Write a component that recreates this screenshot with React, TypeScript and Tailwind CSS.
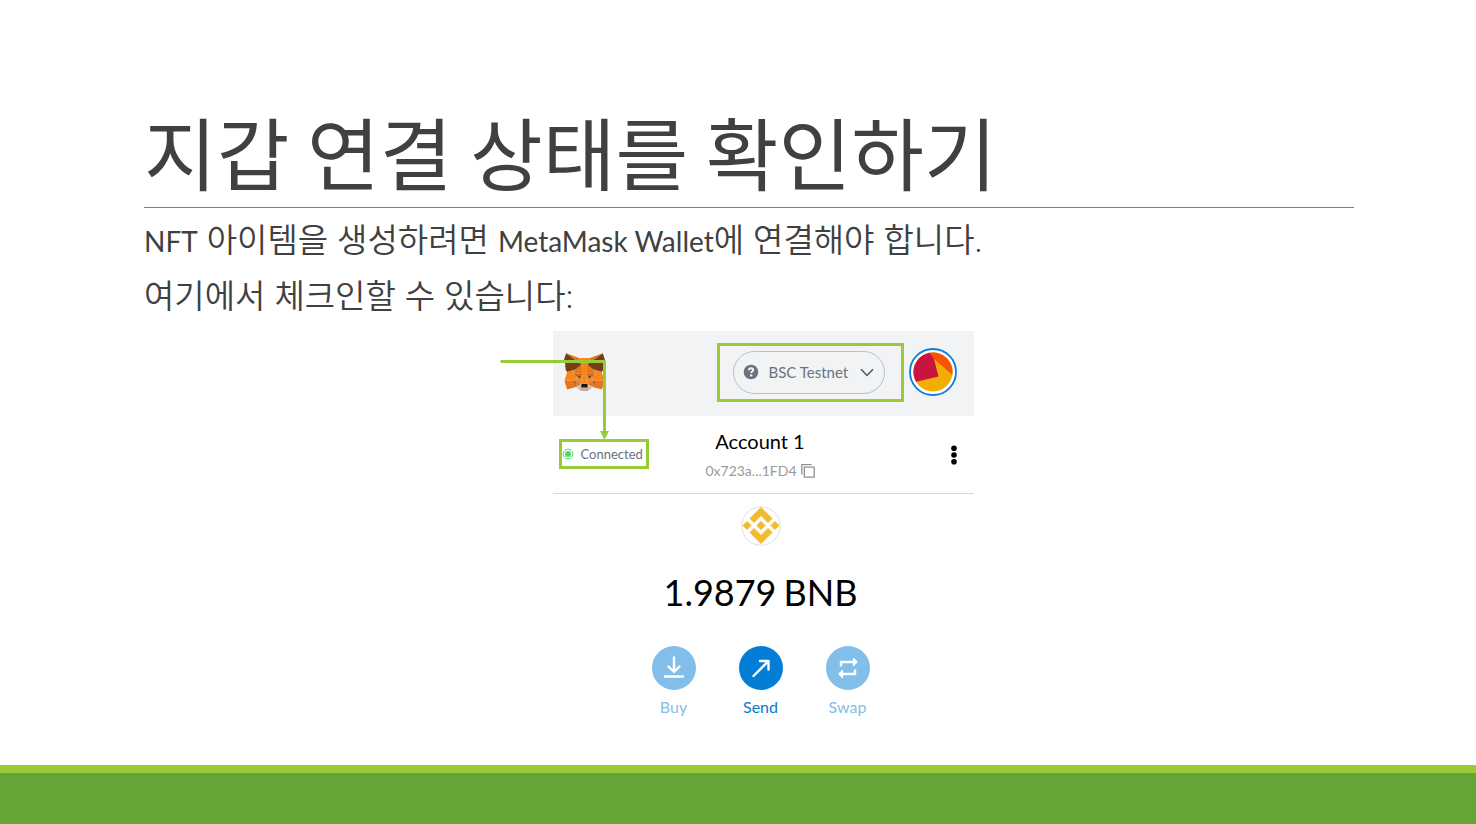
import type { ReactNode } from "react";

const foxFacets: [string, string][] = [
  ["#E2761B", "274.1,35.5 174.6,109.4 193,65.8"],
  ["#E4761B", "44.4,35.5 143.1,110.1 125.6,65.8"],
  ["#E4761B", "238.3,206.8 211.8,247.4 268.5,263 284.8,207.7"],
  ["#E4761B", "33.9,207.7 50.1,263 106.8,247.4 80.3,206.8"],
  ["#E4761B", "103.6,138.2 87.8,162.1 144.1,164.6 142.1,104.1"],
  ["#E4761B", "214.9,138.2 175.9,103.4 174.6,164.6 230.8,162.1"],
  ["#E4761B", "106.8,247.4 140.6,230.9 111.4,208.1"],
  ["#E4761B", "177.9,230.9 211.8,247.4 207.1,208.1"],
  ["#D7C1B3", "211.8,247.4 177.9,230.9 180.6,253 180.3,262.3"],
  ["#D7C1B3", "106.8,247.4 138.3,262.3 138.1,253 140.6,230.9"],
  ["#233447", "138.8,193.5 110.6,185.2 130.5,176.1"],
  ["#233447", "179.7,193.5 188,176.1 208,185.2"],
  ["#CD6116", "106.8,247.4 111.6,206.8 80.3,207.7"],
  ["#CD6116", "207,206.8 211.8,247.4 238.3,207.7"],
  ["#CD6116", "230.8,162.1 174.6,164.6 179.8,193.5 188.1,176.1 208.1,185.2"],
  ["#CD6116", "110.6,185.2 130.6,176.1 138.8,193.5 144.1,164.6 87.8,162.1"],
  ["#E4751F", "87.8,162.1 111.4,208.1 110.6,185.2"],
  ["#E4751F", "208.1,185.2 207.1,208.1 230.8,162.1"],
  ["#E4751F", "144.1,164.6 138.8,193.5 145.4,227.6 146.9,182.7"],
  ["#E4751F", "174.6,164.6 171.9,182.6 173.1,227.6 179.8,193.5"],
  ["#F6851B", "179.8,193.5 173.1,227.6 177.9,230.9 207.1,208.1 208.1,185.2"],
  ["#F6851B", "110.6,185.2 111.4,208.1 140.6,230.9 145.4,227.6 138.8,193.5"],
  ["#C0AD9E", "180.3,262.3 180.6,253 178.1,250.8 140.4,250.8 138.1,253 138.3,262.3 106.8,247.4 117.8,256.4 140.1,271.9 178.4,271.9 200.8,256.4 211.8,247.4"],
  ["#161616", "177.9,230.9 173.1,227.6 145.4,227.6 140.6,230.9 138.1,253 140.4,250.8 178.1,250.8 180.6,253"],
  ["#763D16", "278.3,114.2 286.8,73.4 274.1,35.5 177.9,106.9 214.9,138.2 267.2,153.5 278.8,140 273.8,136.4 281.8,129.1 275.6,124.3 283.6,118.2"],
  ["#763D16", "31.8,73.4 40.3,114.2 34.9,118.2 42.9,124.3 36.8,129.1 44.8,136.4 39.8,140 51.3,153.5 103.6,138.2 140.6,106.9 44.4,35.5"],
  ["#F6851B", "267.2,153.5 214.9,138.2 230.8,162.1 207.1,208.1 238.3,207.7 284.8,207.7"],
  ["#F6851B", "103.6,138.2 51.3,153.5 33.9,207.7 80.3,207.7 111.4,208.1 87.8,162.1"],
  ["#F6851B", "174.6,164.6 177.9,106.9 193.1,65.8 125.6,65.8 140.6,106.9 144.1,164.6 145.3,182.8 145.4,227.6 173.1,227.6 173.3,182.8"],
];

function FoxLogo() {
  return (
    <svg viewBox="31 35 257 237" className="h-[38px] w-[41px]" aria-hidden="true">
      {foxFacets.map(([fill, points]) => (
        <polygon key={points} fill={fill} points={points} />
      ))}
    </svg>
  );
}

function Avatar() {
  return (
    <svg viewBox="0 0 48 48" className="size-12" aria-hidden="true">
      <defs>
        <clipPath id="avatar-disc">
          <circle cx="24" cy="24" r="19.6" />
        </clipPath>
      </defs>
      <circle cx="24" cy="24" r="23" fill="#fff" stroke="#0a7fd9" strokeWidth="1.8" />
      <g clipPath="url(#avatar-disc)">
        <rect width="48" height="48" fill="#f3ae04" />
        <path d="M17 0H48V31L25 11L19 5Z" fill="#fa5400" />
        <path d="M0 0H17L25 11L29.5 28.5L0 35.5Z" fill="#c8143f" />
      </g>
    </svg>
  );
}

function BnbLogo() {
  return (
    <svg viewBox="0 0 40 40" className="size-10" aria-hidden="true">
      <circle cx="20" cy="20" r="19.2" fill="#fff" stroke="#dcdee1" strokeWidth="1" />
      <svg x="1.5" y="1" width="37" height="37" viewBox="-1.5 -1.5 129.61 129.61" fill="#f3ba2f" stroke="#f3ba2f" strokeWidth="3">
        <path d="M38.73 53.2l24.59-24.58 24.6 24.6 14.3-14.31L63.32 0l-38.9 38.9zM0 63.31L14.3 49l14.31 14.31-14.31 14.3zM38.73 73.41L63.32 98l24.6-24.6 14.31 14.29-38.91 38.92-38.91-38.89zM98 63.31L112.3 49l14.31 14.3-14.31 14.32zM77.83 63.3L63.32 48.78 48.78 63.3l14.54 14.52z" />
      </svg>
    </svg>
  );
}

function Action({ label, active, children }: { label: string; active?: boolean; children: ReactNode }) {
  return (
    <button
      type="button"
      className={
        active
          ? "flex w-11 flex-col items-center gap-[7px] text-[#037dd6]"
          : "flex w-11 flex-col items-center gap-[7px] text-[#81beea]"
      }
    >
      <span
        className={
          active
            ? "flex size-11 items-center justify-center rounded-full bg-[#037dd6]"
            : "flex size-11 items-center justify-center rounded-full bg-[#81beea]"
        }
      >
        <svg viewBox="0 0 24 24" className="size-6" fill="none" stroke="#fff" strokeWidth="2.4" strokeLinecap="round" strokeLinejoin="round" aria-hidden="true">
          {children}
        </svg>
      </span>
      <span className="text-base leading-5">{label}</span>
    </button>
  );
}

function Wallet() {
  return (
    <section aria-label="MetaMask" className="relative w-[421px] font-['Lato',sans-serif]">
      <header className="flex h-[85px] items-center bg-[#f2f3f5] pr-[17px] pb-[3px] pl-[11px]">
        <FoxLogo />
        <div className="ml-auto border-3 border-[#99cb38] py-[5px] pr-4 pl-[13px]">
          <div className="relative flex h-[43px] w-[152px] items-center rounded-full border border-[#bbc0c5]">
            <svg viewBox="0 0 16 16" className="pointer-events-none absolute left-[9px] size-4" aria-hidden="true">
              <circle cx="8" cy="8" r="7.3" fill="#6a737d" />
              <path d="M5.9 6.3C6 4.9 6.9 4.3 8.1 4.3c1.2 0 2.1.7 2.1 1.8 0 1.5-1.9 1.5-1.9 2.9" fill="none" stroke="#f2f3f5" strokeWidth="1.9" />
              <circle cx="8.2" cy="11.4" r="1.2" fill="#f2f3f5" />
            </svg>
            <select aria-label="Network" className="h-full w-full appearance-none rounded-full bg-transparent pl-[35px] text-[15px] text-[#6a737d]">
              <option>BSC Testnet</option>
            </select>
            <svg viewBox="0 0 14 9" className="pointer-events-none absolute right-[10px] h-[9px] w-[14px]" fill="none" stroke="#4d545b" strokeWidth="1.5" aria-hidden="true">
              <path d="M1 1.2L7 7.5L13 1.2" />
            </svg>
          </div>
        </div>
        <button type="button" aria-label="Account menu" className="ml-[5px]">
          <Avatar />
        </button>
      </header>

      <div className="grid h-[78px] grid-cols-[1fr_auto_1fr] items-center border-b border-[#d6d9dc] pr-3 pl-[6px]">
        <div className="mb-0.5 flex h-[30px] w-[90px] items-center gap-[7px] border-3 border-[#99cb38]">
          <svg viewBox="0 0 12 12" className="size-3 shrink-0" aria-hidden="true">
            <circle cx="6" cy="6" r="4.8" fill="none" stroke="#4cd964" strokeWidth="1" />
            <circle cx="6" cy="6" r="3" fill="#4cd964" />
          </svg>
          <span className="text-[13px] leading-4 text-[#6a737d]">Connected</span>
        </div>
        <div className="flex flex-col items-center gap-2">
          <h2 className="text-xl leading-6 text-black">Account 1</h2>
          <button type="button" className="flex items-center gap-1 text-sm leading-5 text-[#989a9b]">
            0x723a...1FD4
            <svg viewBox="0 0 14 14" className="size-[14px]" fill="none" stroke="#8f9295" strokeWidth="1.3" aria-hidden="true">
              <path d="M10.5 .7H.8V10.5" />
              <path d="M3.3 3.2H13.2V13.2H3.3Z" />
            </svg>
          </button>
        </div>
        <button type="button" aria-label="Account options" className="justify-self-end">
          <svg viewBox="0 0 16 20" className="h-5 w-4" fill="#000" aria-hidden="true">
            <circle cx="8" cy="3.2" r="2.8" />
            <circle cx="8" cy="10" r="2.8" />
            <circle cx="8" cy="16.8" r="2.8" />
          </svg>
        </button>
      </div>

      <div className="flex flex-col items-center pt-3 pr-[5px]">
        <BnbLogo />
        <p className="mt-5 flex gap-[7px] text-4xl leading-[52px] text-black">
          <span>1.9879</span>
          <span>BNB</span>
        </p>
        <div className="mt-7 flex gap-[43px]">
          <Action label="Buy">
            <path d="M12 1.5V15.5M6.5 10.5L12 16L17.5 10.5M3 20.5H21" />
          </Action>
          <Action label="Send" active>
            <path d="M4.5 20L19.5 5M11 5H19.5V13.5" />
          </Action>
          <Action label="Swap">
            <path d="M5 10.5V6H18M19 13.5V18H6" strokeLinecap="butt" strokeLinejoin="miter" />
            <path d="M17.5 2.5L21 6L17.5 9.5ZM6.5 14.5L3 18L6.5 21.5Z" fill="#fff" strokeWidth="1.2" />
          </Action>
        </div>
      </div>

      <svg viewBox="0 0 110 82" className="pointer-events-none absolute top-[27px] -left-[53px] h-[82px] w-[110px]" aria-hidden="true">
        <path d="M0.5 3.5H104.500V76" fill="none" stroke="#99cb38" strokeWidth="3" strokeLinejoin="round" />
        <path d="M100 73H109L104.5 82Z" fill="#99cb38" />
      </svg>
    </section>
  );
}

export default function App() {
  return (
    <div className="flex min-h-screen flex-col bg-white text-[#404040]">
      <main className="grow pt-[100px] pr-[122px] pl-36">
        <h1 className="border-b border-[#7f7f7f] pb-[5px] font-['Noto_Sans_CJK_KR',sans-serif] text-[79px] leading-[102px] font-normal">
          지갑 연결 상태를 확인하기
        </h1>
        <div className="pt-1 font-['Lato','Noto_Sans_CJK_KR',sans-serif] text-[33px] leading-[54px] font-[350]">
          <p>
            <span className="text-[28px] font-normal">NFT</span> 아이템을 생성하려면{" "}
            <span className="text-[28px] font-normal">MetaMask Wallet</span>에 연결해야 합니다.
          </p>
          <p>여기에서 체크인할 수 있습니다:</p>
        </div>
        <div className="flex justify-center pt-[9px] pl-7">
          <Wallet />
        </div>
      </main>
      <footer className="h-[59px] border-t-8 border-[#99cb38] bg-[#63a537]" />
    </div>
  );
}
